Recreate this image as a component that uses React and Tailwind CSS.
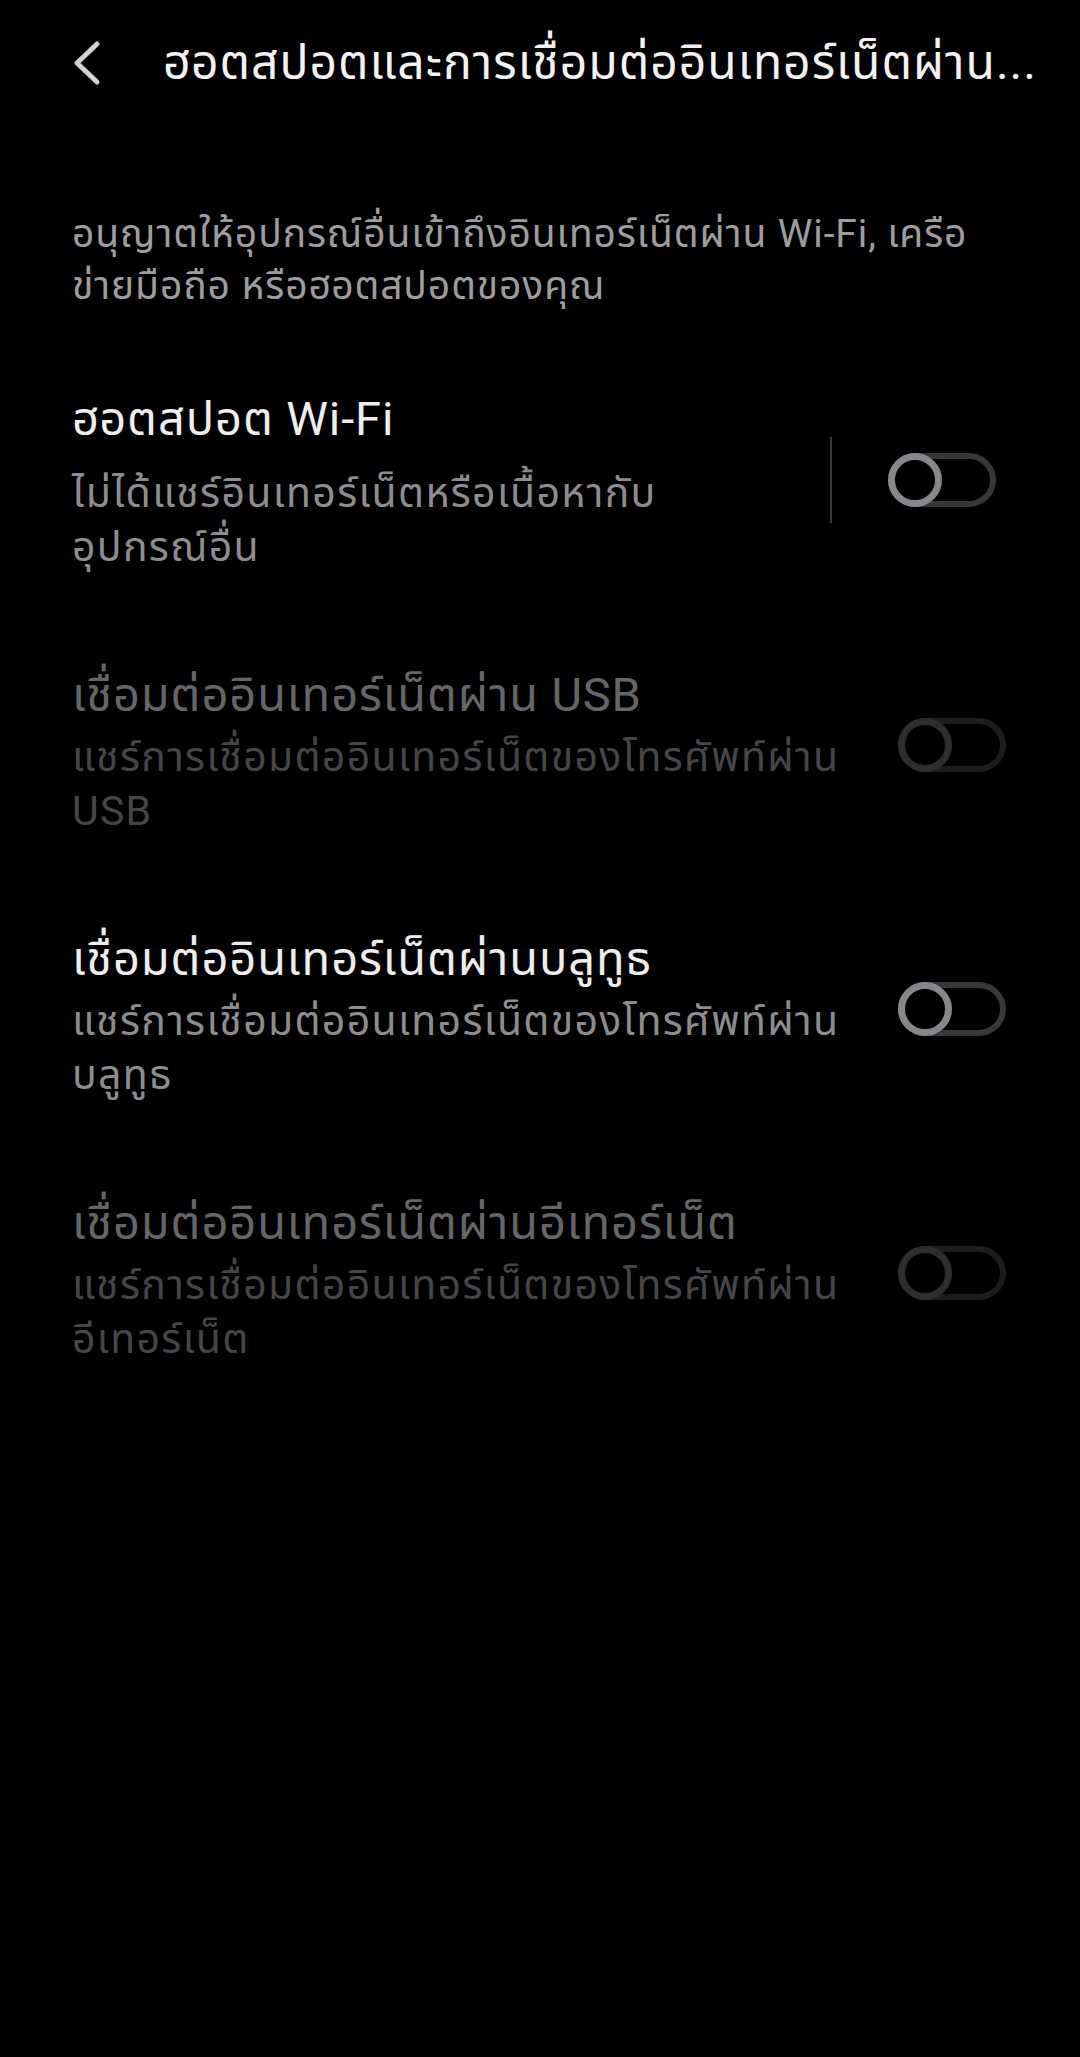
import { useState } from 'react'

const FONT = { fontFamily: 'Roboto, "Noto Sans", "Noto Sans Thai", sans-serif' }

function Toggle({ on, disabled, onClick }) {
  return (
    <button
      onClick={disabled ? undefined : onClick}
      className={`relative w-[108px] h-[54px] rounded-full border-[6px] shrink-0 ${
        disabled ? 'border-[#1d1d1f]' : 'border-[#38383b]'
      }`}
    >
      <span
        className={`absolute -top-[6px] w-[54px] h-[54px] rounded-full border-[7px] bg-black ${
          on ? 'left-[48px]' : '-left-[6px]'
        } ${disabled ? 'border-[#2e2e31]' : 'border-[#86868b]'}`}
      />
    </button>
  )
}

function SettingRow({ title, lines, disabled, on, onToggle, divider }) {
  return (
    <div className="flex items-center py-[47px]">
      <div className="flex-1 min-w-0">
        <p
          className={`text-[47px] leading-[54px] tracking-[0.9px] whitespace-nowrap ${
            disabled ? 'text-[#666668]' : 'text-[#ededed]'
          }`}
        >
          {title}
        </p>
        <div
          className={`${divider ? 'mt-[20px]' : 'mt-[8px]'} text-[41px] leading-[54px] tracking-[1.3px] ${
            disabled ? 'text-[#464648]' : 'text-[#8d8d90]'
          }`}
        >
          {lines.map(l => (
            <p key={l} className="whitespace-nowrap">{l}</p>
          ))}
        </div>
      </div>
      {divider ? (
        <div className="flex items-center mb-[6px]">
          <div className="w-[2px] h-[86px] bg-[#3a3a3c] mr-[56px]" />
          <div className="mr-[12px]">
            <Toggle on={on} disabled={disabled} onClick={onToggle} />
          </div>
        </div>
      ) : (
        <div className="mr-[2px] mb-[16px]">
          <Toggle on={on} disabled={disabled} onClick={onToggle} />
        </div>
      )}
    </div>
  )
}

export default function App() {
  const [wifi, setWifi] = useState(false)
  const [bt, setBt] = useState(false)

  return (
    <div className="min-h-[2057px] w-[1080px] bg-black" style={FONT}>
      {/* Header */}
      <div className="h-[126px] flex items-center">
        <button className="w-[163px] h-full flex items-center justify-start pl-[70px]">
          <svg width="32" height="46" viewBox="0 0 32 46" fill="none">
            <path d="M27 4 L7 23 L27 42" stroke="#d2d2d2" strokeWidth="5" strokeLinecap="round" strokeLinejoin="round" />
          </svg>
        </button>
        <h1 className="text-[48px] tracking-[1px] text-[#f2f2f2] whitespace-nowrap">
          ฮอตสปอตและการเชื่อมต่ออินเทอร์เน็ตผ่าน...
        </h1>
      </div>

      <div className="px-[72px]">
        {/* Description */}
        <div className="mt-[82px] mb-[33px] text-[39px] leading-[52px] tracking-[0.9px] text-[#9d9d9f]">
          <p className="whitespace-nowrap">อนุญาตให้อุปกรณ์อื่นเข้าถึงอินเทอร์เน็ตผ่าน Wi-Fi, เครือ</p>
          <p className="whitespace-nowrap">ข่ายมือถือ หรือฮอตสปอตของคุณ</p>
        </div>

        <SettingRow
          title="ฮอตสปอต Wi-Fi"
          lines={['ไม่ได้แชร์อินเทอร์เน็ตหรือเนื้อหากับ', 'อุปกรณ์อื่น']}
          on={wifi}
          onToggle={() => setWifi(!wifi)}
          divider
        />
        <SettingRow
          title="เชื่อมต่ออินเทอร์เน็ตผ่าน USB"
          lines={['แชร์การเชื่อมต่ออินเทอร์เน็ตของโทรศัพท์ผ่าน', 'USB']}
          disabled
        />
        <SettingRow
          title="เชื่อมต่ออินเทอร์เน็ตผ่านบลูทูธ"
          lines={['แชร์การเชื่อมต่ออินเทอร์เน็ตของโทรศัพท์ผ่าน', 'บลูทูธ']}
          on={bt}
          onToggle={() => setBt(!bt)}
        />
        <SettingRow
          title="เชื่อมต่ออินเทอร์เน็ตผ่านอีเทอร์เน็ต"
          lines={['แชร์การเชื่อมต่ออินเทอร์เน็ตของโทรศัพท์ผ่าน', 'อีเทอร์เน็ต']}
          disabled
        />
      </div>
    </div>
  )
}
